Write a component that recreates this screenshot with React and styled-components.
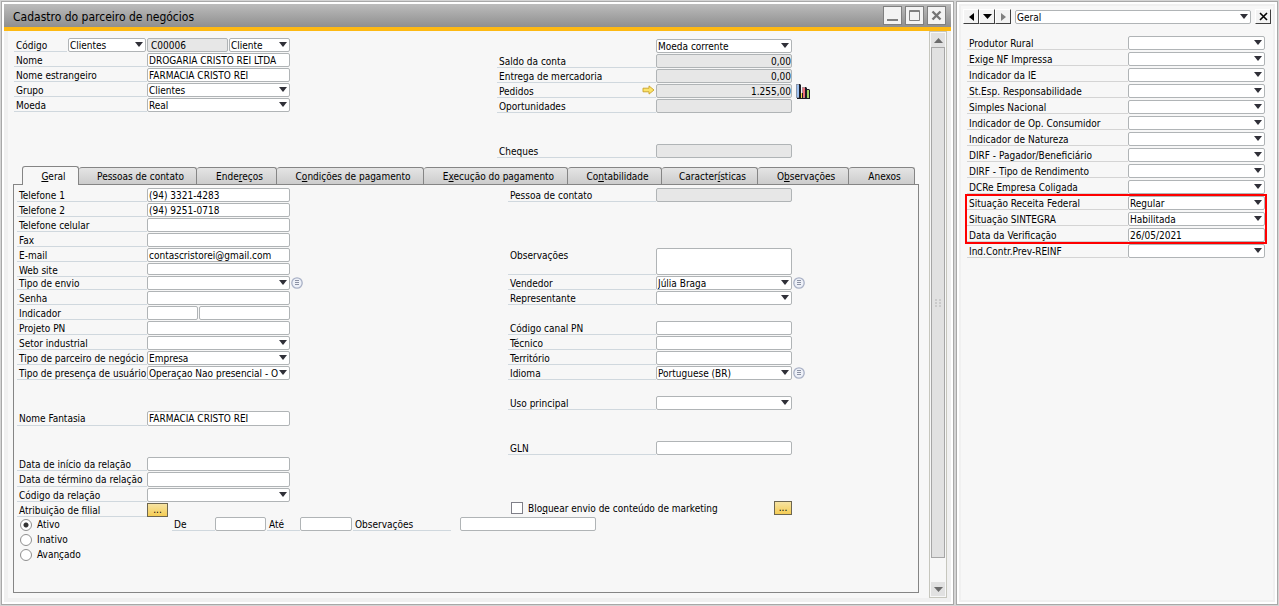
import React, { useState } from "react";
import styled, { createGlobalStyle, css } from "styled-components";

const leftFields = [
  { id: "phone1", label: "Telefone 1", value: "(94) 3321-4283" },
  { id: "phone2", label: "Telefone 2", value: "(94) 9251-0718" },
  { id: "mobile", label: "Telefone celular" },
  { id: "fax", label: "Fax" },
  { id: "email", label: "E-mail", value: "contascristorei@gmail.com" },
  { id: "site", label: "Web site", height: 13 },
  { id: "shipping", label: "Tipo de envio", type: "select", info: true },
  { id: "password", label: "Senha" },
  { id: "indicator", label: "Indicador", type: "pair" },
  { id: "project", label: "Projeto PN" },
  { id: "industry", label: "Setor industrial", type: "select" },
  {
    id: "partnerType",
    label: "Tipo de parceiro de negócio",
    type: "select",
    value: "Empresa",
  },
  {
    id: "presence",
    label: "Tipo de presença de usuário",
    type: "select",
    value: "Operaçao Nao presencial - O",
  },
  { gap: 2 },
  {
    id: "tradeName",
    label: "Nome Fantasia",
    value: "FARMACIA CRISTO REI",
    height: 16,
  },
  { gap: 2 },
  { id: "start", label: "Data de início da relação" },
  { id: "end", label: "Data de término da relação", height: 16 },
  { id: "relation", label: "Código da relação", type: "select" },
  { id: "branch", label: "Atribuição de filial", type: "more", height: 14 },
];

const rightFields = [
  { id: "contact", label: "Pessoa de contato", locked: true },
  { gap: 3 },
  { id: "notes", label: "Observações", type: "textarea", height: 28 },
  {
    id: "seller",
    label: "Vendedor",
    type: "select",
    value: "Júlia Braga",
    info: true,
  },
  { id: "agent", label: "Representante", type: "select" },
  { gap: 1 },
  { id: "channel", label: "Código canal PN" },
  { id: "technician", label: "Técnico" },
  { id: "territory", label: "Território" },
  {
    id: "language",
    label: "Idioma",
    type: "select",
    value: "Portuguese (BR)",
    info: true,
  },
  { gap: 1 },
  { id: "mainUse", label: "Uso principal", type: "select" },
  { gap: 2 },
  { id: "gln", label: "GLN" },
];

const balances = [
  { id: "balance", label: "Saldo da conta", value: "0,00", locked: true },
  { id: "delivery", label: "Entrega de mercadoria", value: "0,00", locked: true },
  {
    id: "orders",
    label: "Pedidos",
    value: "1.255,00",
    locked: true,
    arrow: true,
    chart: true,
  },
  { id: "opportunities", label: "Oportunidades", locked: true },
  { gap: 2 },
  { id: "checks", label: "Cheques", locked: true },
];

// "&" marks the access key of the tab
const tabs = [
  { label: "&Geral", width: 57 },
  { label: "Pessoas de contato", width: 118 },
  { label: "Ende&reços", width: 80 },
  { label: "C&ondições de pagamento", width: 147 },
  { label: "E&xecução do pagamento", width: 144 },
  { label: "Co&ntabilidade", width: 94 },
  { label: "Caracter&ísticas", width: 96 },
  { label: "O&bservações", width: 91 },
  { label: "Anexos", width: 66 },
];

const userFields = [
  { id: "rural", label: "Produtor Rural", type: "select" },
  { id: "nf", label: "Exige NF Impressa", type: "select" },
  { id: "ie", label: "Indicador da IE", type: "select" },
  { id: "resp", label: "St.Esp. Responsabilidade", type: "select" },
  { id: "simples", label: "Simples Nacional", type: "select" },
  { id: "consumer", label: "Indicador de Op. Consumidor", type: "select" },
  { id: "nature", label: "Indicador de Natureza", type: "select" },
  { id: "dirfPayer", label: "DIRF - Pagador/Beneficiário", type: "select" },
  { id: "dirfIncome", label: "DIRF - Tipo de Rendimento", type: "select" },
  { id: "dcre", label: "DCRe Empresa Coligada", type: "select" },
];

const checkedFields = [
  {
    id: "federal",
    label: "Situação Receita Federal",
    type: "select",
    value: "Regular",
  },
  {
    id: "sintegra",
    label: "Situação SINTEGRA",
    type: "select",
    value: "Habilitada",
  },
  { id: "verified", label: "Data da Verificação", value: "26/05/2021" },
];

function Mnemonic({ text }) {
  const [before, after] = text.split("&");
  if (after === undefined) return <span>{text}</span>;
  return (
    <span>
      {before}
      <u>{after[0]}</u>
      {after.slice(1)}
    </span>
  );
}

function InfoButton({ label }) {
  return (
    <IconButton type="button" aria-label={`Detalhes: ${label}`}>
      <svg width="12" height="12" viewBox="0 0 12 12">
        <circle cx="6" cy="6" r="5.2" fill="#eef1f8" stroke="#a9b1c6" strokeWidth="1.3" />
        <path d="M4 3.5h4M4 5.5h4M4 7.5h4" stroke="#80879a" strokeWidth="0.9" />
      </svg>
    </IconButton>
  );
}

function LinkArrow() {
  return (
    <svg width="13" height="10" viewBox="0 0 13 10">
      <path
        d="M1 3.2h6V.9L12 5 7 9.1V6.8H1z"
        fill="#fbe36a"
        stroke="#c9a227"
        strokeWidth="0.9"
      />
    </svg>
  );
}

function ChartIcon() {
  return (
    <svg width="14" height="15" viewBox="0 0 14 15">
      <path d="M1 0h3l1 1v14H1z" fill="#1c1c24" />
      <path d="M0 0h3v14H0z" fill="#8d97a8" />
      <path d="M1 1h2v12H1z" fill="#9cc0f0" />
      <path d="M5 9h2v6H5z" fill="#1c1c24" />
      <path d="M5 9h1v5H5z" fill="#f2e250" />
      <path d="M6 3h4l1 1v11H7z" fill="#1c1c24" />
      <path d="M6 3h3v11H7V9H6z" fill="#b08d92" />
      <path d="M7 4h2v9H7z" fill="#f0727c" />
      <path d="M10 5h3l1 1v9h-4z" fill="#1c1c24" />
      <path d="M11 6h2v8h-2z" fill="#a4d468" />
      <path d="M1 14h13v1H1z" fill="#1c1c24" />
    </svg>
  );
}

function Control({ field }) {
  const { id, type, value = "", locked } = field;
  if (type === "select") {
    return (
      <Select id={id} defaultValue={value}>
        <option>{value}</option>
      </Select>
    );
  }
  if (type === "textarea") return <TextArea id={id} />;
  if (type === "more") {
    return (
      <MoreButton id={id} type="button" $width={21}>
        ...
      </MoreButton>
    );
  }
  if (type === "pair") {
    return (
      <Pair>
        <Input id={id} />
        <Input aria-label={`${field.label} 2`} />
      </Pair>
    );
  }
  return <Input id={id} defaultValue={value} readOnly={locked} $locked={locked} />;
}

function Fields({ items }) {
  return items.map((field, index) =>
    field.gap ? (
      <Gap key={index} $rows={field.gap} />
    ) : (
      <Row key={field.id} $height={field.height}>
        <Label htmlFor={field.id}>
          {field.label}
          {field.arrow && <LinkArrow />}
        </Label>
        <Control field={field} />
        {field.info && <InfoButton label={field.label} />}
        {field.chart && (
          <ChartButton type="button" aria-label="Gráfico de pedidos">
            <ChartIcon />
          </ChartButton>
        )}
      </Row>
    )
  );
}

export default function App() {
  const [activeTab, setActiveTab] = useState(0);
  const [status, setStatus] = useState("Ativo");

  return (
    <>
      <GlobalStyle />
      <Desktop>
        <Window>
          <TitleBar>
            <h1>Cadastro do parceiro de negócios</h1>
            <WindowButton type="button" aria-label="Minimizar">
              <svg width="17" height="17" viewBox="0 0 17 17">
                <path d="M3 13h11" stroke="#808080" strokeWidth="2" />
              </svg>
            </WindowButton>
            <WindowButton type="button" aria-label="Maximizar">
              <svg width="17" height="17" viewBox="0 0 17 17">
                <path
                  d="M3.5 3.5h10v10h-10zM3 4.5h11"
                  fill="none"
                  stroke="#808080"
                />
              </svg>
            </WindowButton>
            <WindowButton type="button" aria-label="Fechar">
              <svg width="17" height="17" viewBox="0 0 17 17">
                <path
                  d="M4.5 4.5l8 8M12.5 4.5l-8 8"
                  stroke="#757575"
                  strokeWidth="2.4"
                />
              </svg>
            </WindowButton>
          </TitleBar>
          <WindowBody>
            <Form>
              <Header>
                <Column $label={133} $field={143}>
                  <CodeRow>
                    <Label htmlFor="code">Código</Label>
                    <Select aria-label="Série" defaultValue="Clientes">
                      <option>Clientes</option>
                    </Select>
                    <Input id="code" defaultValue="C00006" readOnly $locked $indent />
                    <Select aria-label="Tipo" defaultValue="Cliente">
                      <option>Cliente</option>
                    </Select>
                  </CodeRow>
                  <Fields
                    items={[
                      {
                        id: "name",
                        label: "Nome",
                        value: "DROGARIA CRISTO REI LTDA",
                      },
                      {
                        id: "foreignName",
                        label: "Nome estrangeiro",
                        value: "FARMACIA CRISTO REI",
                      },
                      {
                        id: "group",
                        label: "Grupo",
                        type: "select",
                        value: "Clientes",
                      },
                      {
                        id: "currency",
                        label: "Moeda",
                        type: "select",
                        value: "Real",
                      },
                    ]}
                  />
                </Column>
                <Column $label={159} $field={136} $numeric>
                  <CurrencyRow>
                    <Select aria-label="Moeda" defaultValue="Moeda corrente">
                      <option>Moeda corrente</option>
                    </Select>
                  </CurrencyRow>
                  <Fields items={balances} />
                </Column>
              </Header>

              <TabList role="tablist">
                {tabs.map((tab, index) => (
                  <Tab
                    key={tab.label}
                    type="button"
                    role="tab"
                    aria-selected={index === activeTab}
                    $active={index === activeTab}
                    $width={tab.width}
                    onClick={() => setActiveTab(index)}
                  >
                    <Mnemonic text={tab.label} />
                  </Tab>
                ))}
              </TabList>

              <Panel>
                <PanelColumns>
                  <Column $label={130} $field={143}>
                    <Fields items={leftFields} />
                  </Column>
                  <Column $label={148} $field={136}>
                    <Fields items={rightFields} />
                    <Marketing>
                      <Check>
                        <input type="checkbox" />
                        <Mnemonic text="Blo&quear envio de conteúdo de marketing" />
                      </Check>
                      <MoreButton type="button" aria-label="Marketing" $width={18}>
                        ...
                      </MoreButton>
                    </Marketing>
                  </Column>
                </PanelColumns>
                <StatusArea>
                  <div>
                    {["Ativo", "Inativo", "Avan&çado"].map((option) => (
                      <Radio key={option}>
                        <input
                          type="radio"
                          name="status"
                          checked={status === option}
                          onChange={() => setStatus(option)}
                        />
                        <Mnemonic text={option} />
                      </Radio>
                    ))}
                  </div>
                  <Period>
                    <PeriodLabel htmlFor="from" $width={43}>
                      De
                    </PeriodLabel>
                    <PeriodInput id="from" $width={51} />
                    <PeriodLabel htmlFor="to" $width={33}>
                      Até
                    </PeriodLabel>
                    <PeriodInput id="to" $width={52} />
                    <PeriodLabel htmlFor="statusNotes" $width={98}>
                      Observações
                    </PeriodLabel>
                    <NotesInput id="statusNotes" $width={136} />
                  </Period>
                </StatusArea>
              </Panel>
            </Form>

            <Scrollbar>
              <ScrollButton type="button" aria-label="Rolar para cima">
                <svg width="9" height="5" viewBox="0 0 9 5">
                  <path d="M0 5L4.5 0 9 5z" fill="#6b6b6b" />
                </svg>
              </ScrollButton>
              <Thumb>
                <svg width="8" height="8" viewBox="0 0 8 8">
                  <path
                    d="M1 1h2M1 4h2M1 7h2M5 1h2M5 4h2M5 7h2"
                    stroke="#b4b4b4"
                  />
                </svg>
              </Thumb>
              <ScrollButton type="button" aria-label="Rolar para baixo">
                <svg width="9" height="5" viewBox="0 0 9 5">
                  <path d="M0 0L4.5 5 9 0z" fill="#6b6b6b" />
                </svg>
              </ScrollButton>
            </Scrollbar>
          </WindowBody>
        </Window>

        <SideWindow>
          <SideBody>
            <Toolbar>
              <ToolGroup>
                <ToolButton type="button" aria-label="Anterior">
                  <svg width="5" height="8" viewBox="0 0 5 8">
                    <path d="M5 0v8L0 4z" fill="#000" />
                  </svg>
                </ToolButton>
                <ToolButton type="button" aria-label="Lista">
                  <svg width="9" height="5" viewBox="0 0 9 5">
                    <path d="M0 0h9L4.5 5z" fill="#000" />
                  </svg>
                </ToolButton>
                <ToolButton type="button" aria-label="Próximo">
                  <svg width="5" height="8" viewBox="0 0 5 8">
                    <path d="M0 0v8l5-4z" fill="#808080" />
                  </svg>
                </ToolButton>
              </ToolGroup>
              <Select aria-label="Categoria" defaultValue="Geral">
                <option>Geral</option>
              </Select>
              <ToolButton type="button" aria-label="Fechar painel">
                <svg width="9" height="9" viewBox="0 0 9 9">
                  <path d="M1 1l7 7M8 1L1 8" stroke="#000" strokeWidth="1.6" />
                </svg>
              </ToolButton>
            </Toolbar>
            <UserFields>
              <Fields items={userFields} />
              <Highlight>
                <Fields items={checkedFields} />
              </Highlight>
              <Fields
                items={[
                  { id: "reinf", label: "Ind.Contr.Prev-REINF", type: "select" },
                ]}
              />
            </UserFields>
          </SideBody>
        </SideWindow>
      </Desktop>
    </>
  );
}

const GlobalStyle = createGlobalStyle`
  * {
    box-sizing: border-box;
  }
  body {
    margin: 0;
    background: #d4d4d4;
  }
  body, button, input, select, textarea {
    font-family: "DejaVu Sans Condensed", "Noto Sans", sans-serif;
    font-size: 10px;
    color: #000;
  }
  svg {
    display: block;
    flex: none;
  }
`;

const Desktop = styled.div`
  display: flex;
  gap: 2px;
  min-height: 100vh;
  padding: 1px;
`;

const Window = styled.main`
  flex: 1;
  display: flex;
  flex-direction: column;
  min-width: 0;
  border: 1px solid #a8a8a8;
  background: #fff;
  padding: 2px;
`;

const TitleBar = styled.header`
  display: flex;
  align-items: center;
  gap: 3px;
  height: 27px;
  padding: 0 5px 0 9px;
  border-bottom: 4px solid #fdb913;
  background: linear-gradient(#bcbcbc, #8f8f8f);
  h1 {
    flex: 1;
    margin: 0;
    padding-top: 2px;
    font-size: 12px;
    font-weight: normal;
  }
`;

const WindowButton = styled.button`
  display: grid;
  place-items: center;
  width: 19px;
  height: 19px;
  padding: 0;
  border: 1px solid #808080;
  background: #f3f3f3;
`;

const WindowBody = styled.div`
  flex: 1;
  display: flex;
  border: 4px solid #f0f0f0;
  border-top: 0;
  background: #f7f7f7;
`;

const Form = styled.form`
  flex: 1;
  display: flex;
  flex-direction: column;
  min-width: 0;
  padding: 7px 10px 5px 5px;
`;

const fieldBox = css`
  width: 100%;
  min-width: 0;
  height: 14px;
  margin: 0;
  padding: 0 1px;
  border: 1px solid #b0b4b6;
  border-radius: 2px;
  outline: none;
  background-color: #fff;
  line-height: 12px;
`;

const Input = styled.input`
  ${fieldBox}
  ${({ $locked }) => $locked && "background-color: #e7e7e7;"}
  ${({ $indent }) => $indent && "padding-left: 3px;"}
`;

const Select = styled.select`
  ${fieldBox}
  appearance: none;
  padding-top: 1px;
  padding-right: 8px;
  background-image: url("data:image/svg+xml,%3Csvg xmlns='http://www.w3.org/2000/svg' width='8' height='5'%3E%3Cpath d='M0 0h8L4 5z' fill='%23303038'/%3E%3C/svg%3E");
  background-repeat: no-repeat;
  background-position: right 2px top 3px;
`;

const TextArea = styled.textarea`
  ${fieldBox}
  height: 27px;
  resize: none;
`;

const Row = styled.div`
  display: grid;
  grid-template-columns: var(--label) var(--field) auto;
  justify-content: start;
  align-items: start;
  height: ${({ $height = 15 }) => $height}px;
  & > ${Input} {
    height: ${({ $height = 15 }) => $height - 1}px;
  }
`;

const Label = styled.label`
  display: flex;
  align-items: flex-start;
  justify-content: space-between;
  height: calc(100% - 1px);
  padding: 1px 1px 0 2px;
  border-bottom: 1px solid #d0d8de;
  line-height: 13px;
  white-space: nowrap;
`;

const Column = styled.div`
  --label: ${({ $label }) => $label}px;
  --field: ${({ $field }) => $field}px;
  ${({ $numeric }) => $numeric && `${Input} { text-align: right; padding-right: 0; }`}
`;

const Gap = styled.div`
  height: ${({ $rows }) => $rows * 15}px;
`;

const Header = styled.div`
  display: grid;
  grid-template-columns: 483px 1fr;
  padding-left: 1px;
  height: 128px;
`;

const CodeRow = styled.div`
  display: grid;
  grid-template-columns: 53px 78px 81px 61px;
  gap: 1px;
  height: 15px;
`;

const CurrencyRow = styled.div`
  height: 16px;
  padding: 1px 0 0 var(--label);
  ${Select} {
    width: var(--field);
  }
`;

const IconButton = styled.button`
  height: 14px;
  margin: 0;
  padding: 0 0 0 1px;
  border: 0;
  background: none;
`;

const ChartButton = styled(IconButton)`
  display: grid;
  align-items: end;
  padding-left: 4px;
`;

const TabList = styled.div`
  display: flex;
  align-items: flex-end;
  padding-left: 9px;
  height: 18px;
`;

const Tab = styled.button`
  width: ${({ $width }) => $width}px;
  height: ${({ $active }) => ($active ? 19 : 17)}px;
  margin: 0 0 ${({ $active }) => ($active ? -1 : 0)}px;
  padding: 0 0 0 6px;
  border: 1px solid #858585;
  border-left-width: ${({ $active }) => ($active ? 1 : 0)}px;
  border-bottom: 0;
  border-radius: 3px 3px 0 0;
  background: ${({ $active }) =>
    $active ? "#f7f7f7" : "linear-gradient(#e4e4e4, #cccccc)"};
  white-space: nowrap;
  z-index: ${({ $active }) => ($active ? 1 : 0)};
`;

const Panel = styled.section`
  flex: 1;
  padding: 3px;
  border: 1px solid #858585;
`;

const PanelColumns = styled.div`
  display: grid;
  grid-template-columns: 491px 1fr;
`;

const Pair = styled.div`
  display: grid;
  grid-template-columns: 51px 1fr;
  gap: 1px;
`;

const MoreButton = styled.button`
  width: ${({ $width }) => $width}px;
  height: 14px;
  margin: 0;
  padding: 0;
  border: 1px solid #6d6650;
  background: linear-gradient(#f6e3a3, #f5cd55);
  line-height: 12px;
`;

const Marketing = styled.div`
  display: flex;
  justify-content: space-between;
  width: 284px;
  margin-top: 45px;
`;

const Check = styled.label`
  display: flex;
  align-items: center;
  gap: 5px;
  padding-left: 3px;
  input {
    appearance: none;
    width: 12px;
    height: 12px;
    margin: 0;
    border: 1px solid #7f7f88;
    background: #fff;
  }
`;

const StatusArea = styled.div`
  display: flex;
  align-items: flex-start;
`;

const Radio = styled.label`
  display: flex;
  align-items: center;
  gap: 5px;
  width: 154px;
  height: 15px;
  padding-left: 3px;
  input {
    appearance: none;
    width: 12px;
    height: 12px;
    margin: 0;
    border: 1px solid #8f8f8f;
    border-radius: 50%;
    background: #fff;
  }
  input:checked {
    background: radial-gradient(#333 0 2px, #fff 3px);
  }
`;

const Period = styled.div`
  display: flex;
`;

const PeriodLabel = styled(Label)`
  width: ${({ $width }) => $width}px;
  height: 14px;
  margin-left: 1px;
`;

const PeriodInput = styled(Input)`
  width: ${({ $width }) => $width}px;
`;

const NotesInput = styled(PeriodInput)`
  margin-left: 9px;
`;

const Scrollbar = styled.div`
  display: flex;
  flex-direction: column;
  width: 18px;
  padding: 1px;
  border: 1px solid #c6c6bd;
  background: #f7f7f7;
`;

const ScrollButton = styled.button`
  display: grid;
  place-items: center;
  height: 14px;
  margin: 0;
  padding: 0;
  border: 0;
  background: #e1e1e1;
`;

const Thumb = styled.div`
  flex: 1;
  display: grid;
  place-items: center;
  margin-bottom: 24px;
  border: 1px solid #a6a6a6;
  background: #e1e1e1;
`;

const SideWindow = styled.aside`
  width: 322px;
  border: 1px solid #a8a8a8;
  background: #fff;
  padding: 2px;
`;

const SideBody = styled.div`
  height: 100%;
  padding: 3px 2px 0;
  border: 2px solid #f0f0f0;
  background: #f7f7f7;
`;

const Toolbar = styled.div`
  display: flex;
  align-items: center;
  gap: 4px;
  height: 15px;
  ${Select} {
    flex: 1;
  }
`;

const ToolGroup = styled.div`
  display: flex;
`;

const ToolButton = styled.button`
  display: grid;
  place-items: center;
  width: 16px;
  height: 15px;
  margin: 0;
  padding: 0;
  border: 1px solid #fff;
  border-right-color: #404040;
  border-bottom-color: #404040;
  background: #f3f3f3;
`;

const UserFields = styled.div`
  --label: 161px;
  --field: 1fr;
  padding: 12px 6px 0 4px;
  ${Row} {
    grid-template-columns: var(--label) var(--field);
    justify-content: stretch;
    height: 16px;
  }
  ${Label} {
    height: 14px;
    padding-top: 2px;
    line-height: 12px;
    border-color: #d4d4d4;
  }
`;

const Highlight = styled.div`
  margin: -2px -2px 0;
  border: 2px solid #ff0000;
  ${Row}:last-child {
    height: 14px;
  }
`;
